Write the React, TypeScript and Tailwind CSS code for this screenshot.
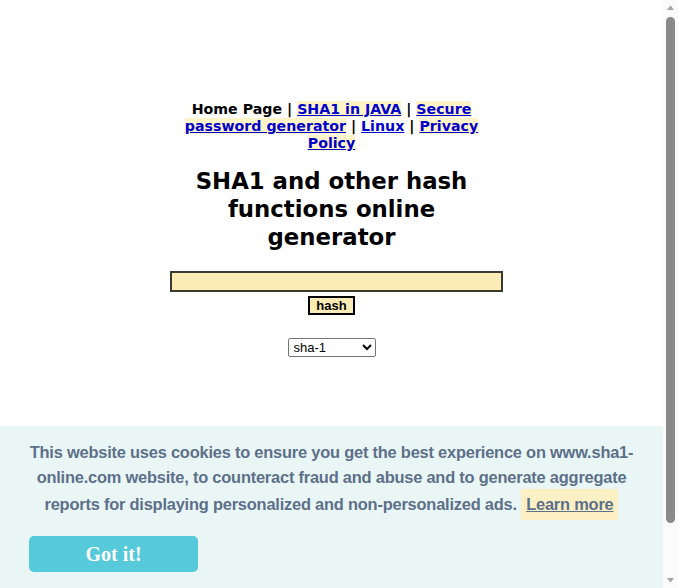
export default function App() {
  return (
    <div className="flex h-[588px] overflow-hidden bg-white">
      <div className="relative w-[663px] shrink-0">
        <div className="mx-auto w-[300px] pt-[101px] text-center font-['DejaVu_Sans',Verdana,sans-serif]">
          <nav className="text-[14.2px] leading-[17px] font-bold text-black">
            Home Page |{" "}
            <a href="#" className="bg-[#fff3c8] text-[#0000cc] underline">SHA1 in JAVA</a> |{" "}
            <a href="#" className="bg-[#fff3c8] text-[#0000cc] underline">Secure password generator</a> |{" "}
            <a href="#" className="text-[#0000cc] underline">Linux</a> |{" "}
            <a href="#" className="bg-[#fff3c8] text-[#0000cc] underline">Privacy Policy</a>
          </nav>
          <h1 className="mt-[15px] text-[22.8px] leading-[28px] font-bold text-black">
            SHA1 and other hash functions online generator
          </h1>
        </div>

        <form className="mt-[20px] flex flex-col items-center font-['Liberation_Sans',Arial,sans-serif]">
          <input
            type="text"
            className="ml-[10px] h-[21px] w-[333px] border-2 border-[#3a3a30] bg-[#fdebb6] px-1 text-[13px] outline-none"
          />
          <button
            type="button"
            className="mt-[4px] h-[19px] border-2 border-black bg-[#fdebb6] px-[6px] text-[13px] leading-[14px] font-bold text-black"
          >
            hash
          </button>
          <select className="mt-[23px] h-[19px] w-[88px] rounded-[2px] border border-[#767676] bg-white pl-[1px] text-[13px] text-black">
            <option>sha-1</option>
          </select>
        </form>

        <div className="absolute right-0 bottom-0 left-0 h-[162px] bg-[#eaf6f6] px-[29px] pt-[14px] font-['Liberation_Sans',Arial,sans-serif]">
          <p className="text-center text-[16.4px] leading-[24.5px] font-bold tracking-[-0.2px] text-[#5d7089]">
            This website uses cookies to ensure you get the best experience on www.sha1-online.com website, to counteract fraud and abuse and to generate aggregate reports for displaying personalized and non-personalized ads.{" "}
            <a href="#" className="inline-block bg-[#fdf0c4] px-[5px] py-[3px] leading-[25px] text-[#5d7089] underline">Learn more</a>
          </p>
          <button
            type="button"
            className="mt-[16px] h-[36px] w-[169px] rounded-[5px] bg-[#56c9da] font-['Liberation_Serif',serif] text-[20px] font-bold text-white"
          >
            Got it!
          </button>
        </div>
      </div>

      {/* scrollbar */}
      <div className="flex w-[15px] shrink-0 flex-col items-center bg-[#fbfbfb]">
        <svg width="15" height="17" viewBox="0 0 15 17">
          <path d="M4 10 L7.5 5.5 L11 10 Z" fill="#a3a3a3" />
        </svg>
        <div className="h-[506px] w-[9px] rounded-full bg-[#8a8a8a]" />
        <div className="flex-1" />
        <svg width="15" height="17" viewBox="0 0 15 17">
          <path d="M4 7 L7.5 11.5 L11 7 Z" fill="#a3a3a3" />
        </svg>
      </div>
    </div>
  );
}
